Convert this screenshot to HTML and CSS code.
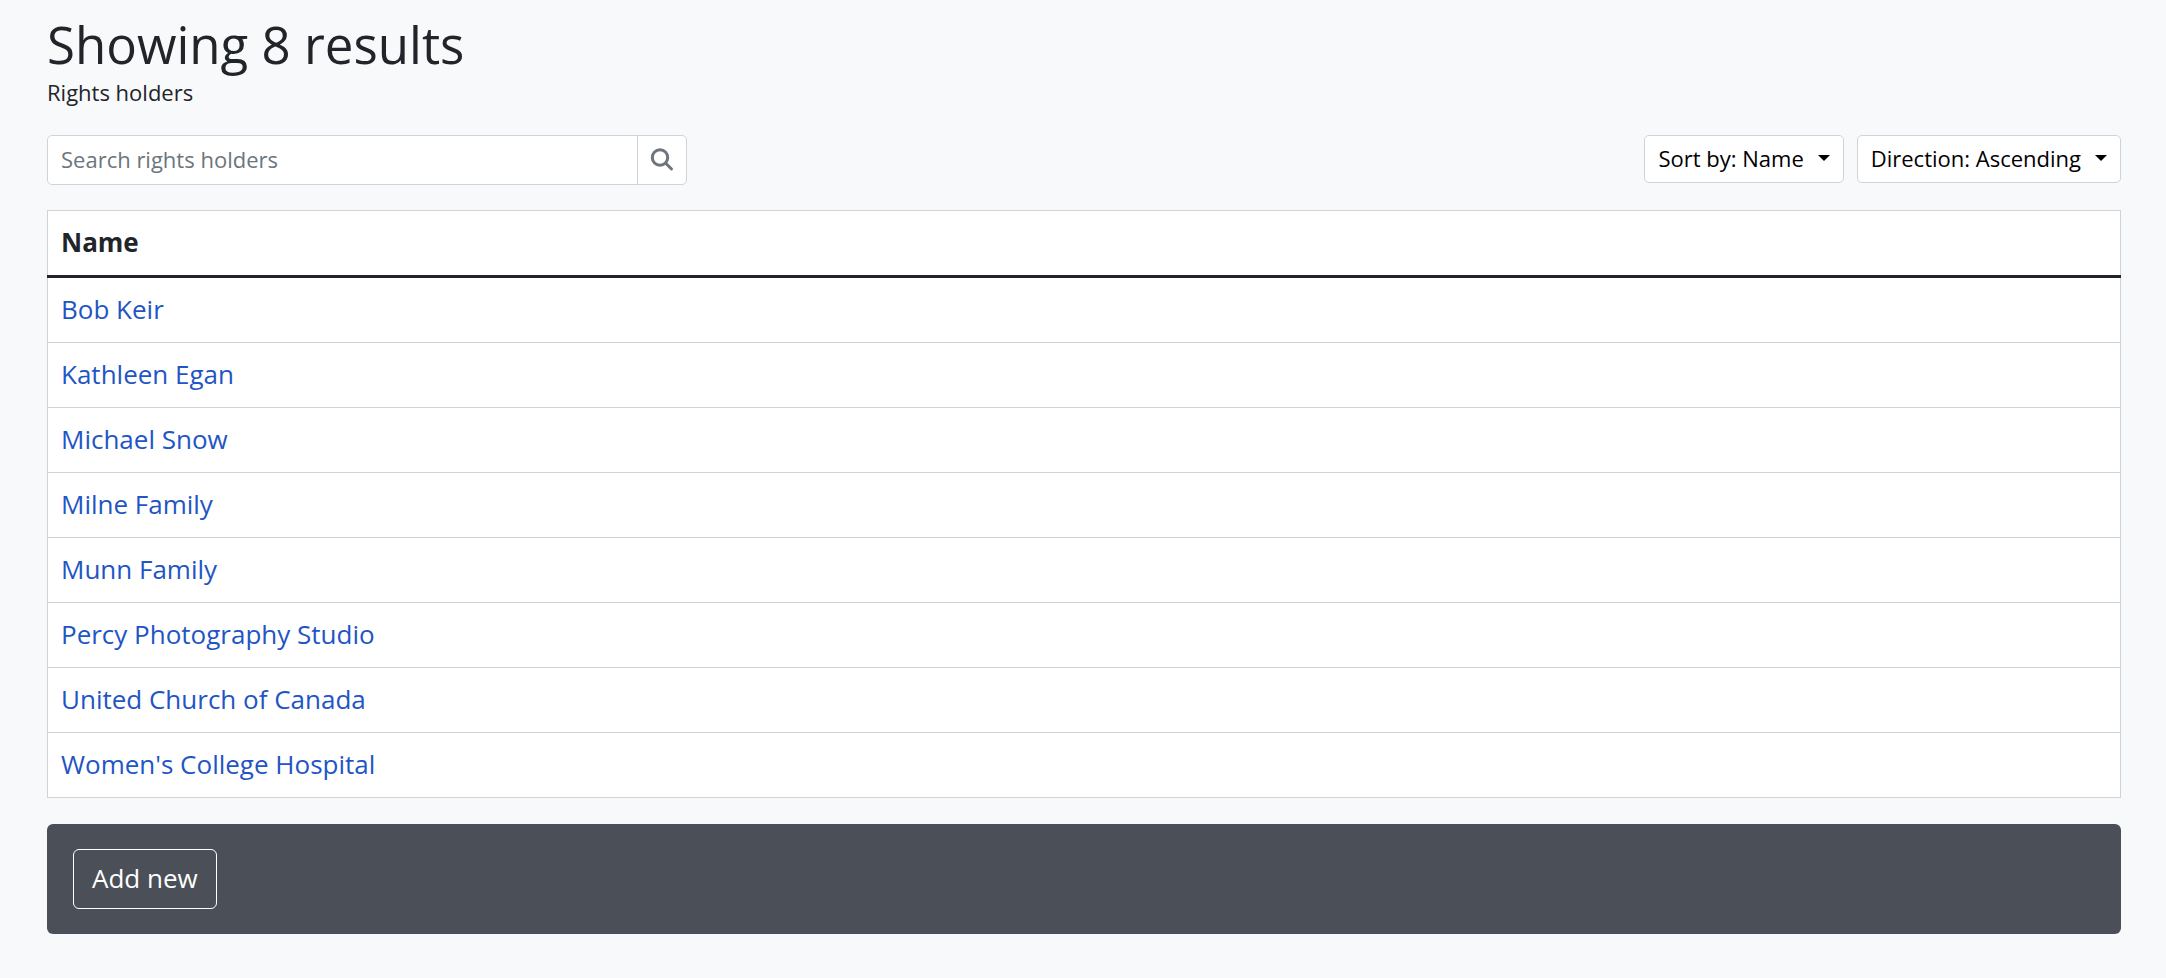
FILE: index.html
```html
<!DOCTYPE html>
<html lang="en">
<head>
    <meta charset="UTF-8">
    <meta name="viewport" content="width=device-width, initial-scale=1.0">
    <title>Rights holders</title>
    <link rel="stylesheet" href="styles.css">
</head>
<body>
    <main class="container">
        <!-- Heading -->
        <header class="page-header">
            <h1>Showing 8 results</h1>
            <p class="subtitle">Rights holders</p>
        </header>

        <!-- Search and sort -->
        <div class="toolbar">
            <form class="search" role="search">
                <input type="search" class="search-input" placeholder="Search rights holders" aria-label="Search rights holders">
                <button type="submit" class="search-btn" aria-label="Search">
                    <svg viewBox="0 0 24 24" aria-hidden="true">
                        <circle cx="10" cy="9.5" r="7.7"></circle>
                        <path d="M15.5 15L21.5 21"></path>
                    </svg>
                </button>
            </form>
            <div class="sort-options">
                <button type="button" class="btn-sort" aria-haspopup="true">Sort by: Name</button>
                <button type="button" class="btn-sort" aria-haspopup="true">Direction: Ascending</button>
            </div>
        </div>

        <!-- Results -->
        <table class="table">
            <thead>
                <tr><th scope="col">Name</th></tr>
            </thead>
            <tbody>
                <tr><td><a href="#">Bob Keir</a></td></tr>
                <tr><td><a href="#">Kathleen Egan</a></td></tr>
                <tr><td><a href="#">Michael Snow</a></td></tr>
                <tr><td><a href="#">Milne Family</a></td></tr>
                <tr><td><a href="#">Munn Family</a></td></tr>
                <tr><td><a href="#">Percy Photography Studio</a></td></tr>
                <tr><td><a href="#">United Church of Canada</a></td></tr>
                <tr><td><a href="#">Women's College Hospital</a></td></tr>
            </tbody>
        </table>

        <section class="actions">
            <button type="button" class="btn-add">Add new</button>
        </section>
    </main>
</body>
</html>
```
FILE: styles.css
```css
* {
    box-sizing: border-box;
}
body {
    margin: 0;
    background-color: #f8f9fb;
    font-family: 'Open Sans', sans-serif;
    font-size: 26px;
    line-height: 38px;
    color: #212529;
}
button,
input {
    font-family: inherit;
}
.container {
    padding: 13px 45px 44px 47px;
}
.page-header {
    margin-bottom: 26px;
}
h1 {
    margin: 0;
    font-size: 51px;
    font-weight: 400;
    line-height: 62px;
}
.subtitle {
    margin: 0;
    font-size: 22px;
    line-height: 34px;
}
.toolbar {
    display: flex;
    justify-content: space-between;
    align-items: flex-start;
    gap: 13px;
    margin-bottom: 25px;
}
.search {
    display: flex;
    width: 640px;
}
.search-input {
    flex: 1;
    min-width: 0;
    height: 50px;
    padding: 0 13px 2px;
    border: 1px solid #ced4da;
    border-radius: 5px 0 0 5px;
    background-color: #fff;
    font-size: 22px;
    color: #212529;
    appearance: none;
}
.search-input::placeholder {
    color: #6c757d;
    opacity: 1;
}
.search-btn {
    display: flex;
    align-items: center;
    justify-content: center;
    width: 50px;
    height: 50px;
    margin-left: -1px;
    padding: 0;
    border: 1px solid #ced4da;
    border-radius: 0 5px 5px 0;
    background-color: #fff;
    cursor: pointer;
}
.search-btn svg {
    width: 24px;
    height: 24px;
    fill: none;
    stroke: #6c757d;
    stroke-width: 3;
    stroke-linecap: round;
}
.sort-options {
    display: flex;
    gap: 13px;
}
.btn-sort {
    display: flex;
    align-items: center;
    gap: 14px;
    height: 48px;
    padding: 0 13px 2px;
    border: 1px solid #ced4da;
    border-radius: 5px;
    background-color: #fff;
    font-size: 22px;
    color: #000;
    cursor: pointer;
}
.btn-sort::after {
    content: "";
    border-top: 6px solid #000;
    border-left: 6px solid transparent;
    border-right: 6px solid transparent;
}
.table {
    width: 100%;
    margin-bottom: 26px;
    border-collapse: collapse;
    border: 1px solid #ced4da;
    background-color: #fff;
}
.table th,
.table td {
    padding: 12px 13px 14px;
    border-bottom: 1px solid #ced4da;
    text-align: left;
}
.table th {
    border-bottom: 3px solid #212529;
    font-weight: 700;
}
.table a {
    color: #1f55c4;
    text-decoration: none;
}
.table a:hover {
    text-decoration: underline;
}
.actions {
    padding: 25px 26px;
    border-radius: 6px;
    background-color: #4b4f57;
}
.btn-add {
    display: block;
    height: 60px;
    padding: 0 18px 2px;
    border: 1px solid #fff;
    border-radius: 6px;
    background-color: transparent;
    font-size: 26px;
    color: #fff;
    cursor: pointer;
}
.btn-add:hover {
    background-color: #fff;
    color: #4b4f57;
}
```
